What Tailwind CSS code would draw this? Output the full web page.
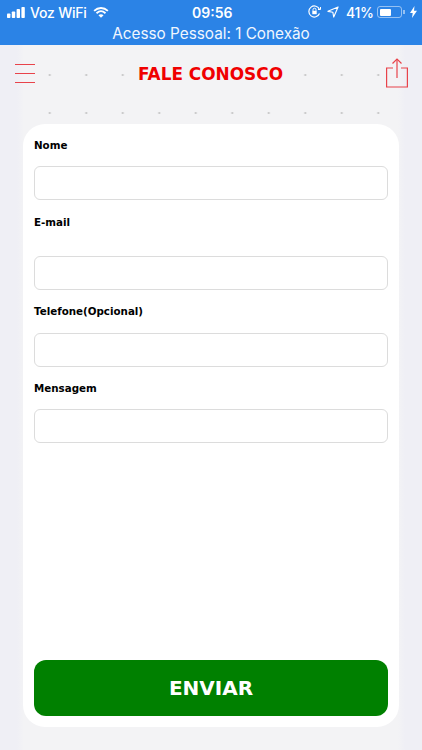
<!DOCTYPE html>
<html lang="en">
<head>
    <meta charset="UTF-8">
    <meta name="viewport" content="width=device-width, initial-scale=1.0">
    <title>Fale Conosco</title>
    <script src="https://cdn.jsdelivr.net/npm/@tailwindcss/browser@4"></script>
</head>
<body class="w-[422px] h-[750px] overflow-hidden bg-[linear-gradient(90deg,#efeff5_17px,#f3f3f5_24px,#f3f3f5_398px,#efeff5_405px)] font-['DejaVu_Sans',sans-serif]">

    <!-- Status bar -->
    <div class="h-[45px] bg-[#2b83e6] text-white font-['Inter',sans-serif]">
        <div class="h-[24px] flex items-center relative text-[14px] font-medium">
            <svg class="absolute left-[7px] top-[7px]" width="19" height="11" viewBox="0 0 19 11" fill="#fff"><rect x="0" y="6.500" width="3.400" height="4.500" rx=".8"/><rect x="4.800" y="4.500" width="3.400" height="6.500" rx=".8"/><rect x="9.600" y="2" width="3.400" height="9" rx=".8"/><rect x="14.400" y="0" width="3.400" height="11" rx=".8"/></svg>
            <span class="absolute left-[30px] tracking-[-0.2px]">Voz WiFi</span>
            <svg class="absolute left-[93px] top-[7px]" width="16" height="11" viewBox="0 0 17 12" fill="none" stroke="#fff" stroke-width="2"><path d="M1 4.200C5.400 0 11.600 0 16 4.200"/><path d="M3.600 6.800C6.600 4 10.400 4 13.400 6.800"/><path d="M8.500 11.800 5.700 9C7.500 7.600 9.500 7.600 11.300 9Z" fill="#fff" stroke="none"/></svg>
            <span class="absolute left-[192px] font-semibold">09:56</span>
            <svg class="absolute left-[308px] top-[5px]" width="13" height="13" viewBox="0 0 13 13" fill="none" stroke="#fff" stroke-width="1.200"><path d="M11.500 8.500A5.500 5.500 0 1 1 11.500 4.500"/><path d="M10 4.500h2.500V2" stroke-width="1"/><rect x="4.300" y="5.800" width="4.400" height="3.400" fill="#fff" stroke="none"/><path d="M5 5.800V4.700a1.500 1.500 0 0 1 3 0v1.100" stroke-width="1"/></svg>
            <svg class="absolute left-[327px] top-[6px]" width="12" height="12" viewBox="0 0 13 13" fill="none" stroke="#fff" stroke-width="1.200"><path d="M12 1 1 5.800 6.300 6.700 7.300 12Z" stroke-linejoin="round"/></svg>
            <span class="absolute left-[346px] tracking-[-0.3px]">41%</span>
            <div class="absolute left-[377px] top-[6px] w-[25px] h-[12px] rounded-[3px] border border-white/50 p-[1.500px]">
                <div class="w-[11px] h-full bg-white rounded-[1px]"></div>
            </div>
            <div class="absolute left-[403px] top-[10px] w-[1.500px] h-[4px] bg-white/50"></div>
            <svg class="absolute left-[410px] top-[6px]" width="7" height="12" viewBox="0 0 7 12" fill="#fff"><path d="M4.500 0 0 7h2.700L2 12l5-7.200H4Z"/></svg>
        </div>
        <div class="h-[21px] text-center text-[15.300px] leading-[20px] text-[#f0f6fe]">Acesso Pessoal: 1 Conexão</div>
    </div>

    <!-- Header -->
    <div class="h-[79px] relative">
        <div class="absolute left-[32px] w-[364px] h-full bg-[radial-gradient(circle,#c4c4c4_0.8px,transparent_1.300px)] bg-[size:36.500px_38px] bg-[position:-0.500px_11px]"></div>
        <div class="relative flex items-start justify-between pl-[15px] pr-[14px]">
            <div class="mt-[19px] w-[20px] h-[19px] flex flex-col justify-between">
                <div class="h-px bg-[#e8434a]"></div>
                <div class="h-px bg-[#e8434a]"></div>
                <div class="h-px bg-[#e8434a]"></div>
            </div>
            <div class="mt-[18px] px-[4px] bg-[#f3f3f5] text-[16.900px] leading-[22px] font-bold text-[#f00000]">FALE CONOSCO</div>
            <svg class="mt-[13px]" width="22" height="30" viewBox="0 0 22 30" fill="none" stroke="#e8434a" stroke-width="1.200"><path d="M7 10H.6v19h20.800V10H15"/><path d="M11 1v19"/><path d="M6.500 5.500 11 1l4.500 4.500"/></svg>
        </div>
    </div>

    <!-- Form card -->
    <div class="ml-[23px] w-[376px] h-[603px] bg-white rounded-[22px] px-[11px] flex flex-col">
        <label class="mt-[14px] text-[10.300px] leading-[14px] font-bold text-black">Nome</label>
        <input type="text" class="mt-[14px] h-[34px] w-full rounded-[6px] border border-[#dcdcdc]">
        <label class="mt-[15px] text-[10.300px] leading-[14px] font-bold text-black">E-mail</label>
        <input type="text" class="mt-[27px] h-[34px] w-full rounded-[6px] border border-[#dcdcdc]">
        <label class="mt-[14px] text-[10.300px] leading-[14px] font-bold text-black">Telefone(Opcional)</label>
        <input type="text" class="mt-[15px] h-[34px] w-full rounded-[6px] border border-[#dcdcdc]">
        <label class="mt-[14px] text-[10.300px] leading-[14px] font-bold text-black">Mensagem</label>
        <input type="text" class="mt-[14px] h-[34px] w-full rounded-[6px] border border-[#dcdcdc]">
        <button class="mt-auto mb-[11px] h-[56px] w-full rounded-[12px] bg-[#008000] text-white text-[20px] font-bold">ENVIAR</button>
    </div>

</body>
</html>
